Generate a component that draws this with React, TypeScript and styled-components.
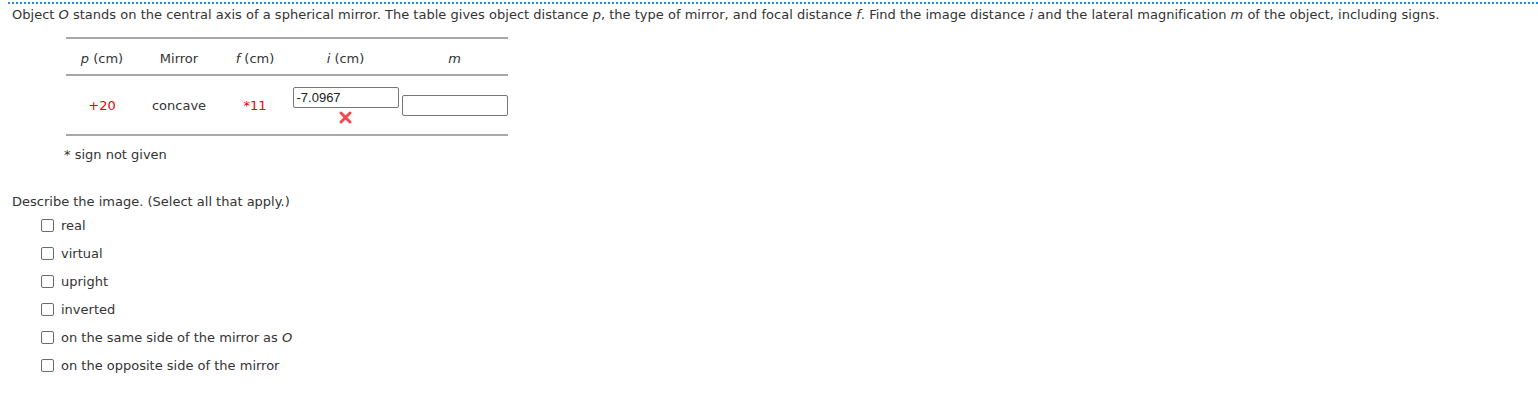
import React from "react";
import styled, { createGlobalStyle } from "styled-components";

const GlobalStyle = createGlobalStyle`
  body {
    margin: 0;
    background: #fff;
    font-family: "DejaVu Sans", Verdana, sans-serif;
    font-size: 13px;
    color: #333;
  }
`;

const Page = styled.div`
  padding: 2px 0 0 8px;
`;

const Question = styled.div`
  border-top: 2px dotted #1a8fe3;
  padding: 3px 0 0 4px;
  line-height: 16px;
  letter-spacing: 0.001em;
`;

const TableWrap = styled.div`
  margin: 14px 0 0 58px;
`;

const DataTable = styled.table`
  border-collapse: collapse;
  width: 442px;
  border-top: 2px solid #a8a8a8;
  border-bottom: 2px solid #a8a8a8;
`;

const HeadCell = styled.th<{ $w: number }>`
  width: ${({ $w }) => $w}px;
  font-weight: normal;
  text-align: center;
  height: 37px;
  padding: 4px 0 0;
  box-sizing: border-box;
  border-bottom: 2px solid #a8a8a8;
`;

const Cell = styled.td<{ $red?: boolean }>`
  text-align: center;
  height: 58px;
  padding: 0;
  vertical-align: middle;
  color: ${({ $red }) => ($red ? "#e8000b" : "#333")};
`;

const Var = styled.i`
  font-style: italic;
`;

const AnswerBox = styled.div`
  display: flex;
  flex-direction: column;
  align-items: center;
  gap: 3px;
`;

const Input = styled.div`
  box-sizing: border-box;
  width: 106px;
  height: 21px;
  border: 1px solid #767676;
  border-radius: 2px;
  font-family: "Liberation Sans", Arial, sans-serif;
  font-size: 13px;
  color: #222;
  line-height: 19px;
  padding-left: 3px;
  text-align: left;
`;

const Note = styled.div`
  margin: 11px 0 0 56px;
`;

const Prompt = styled.div`
  margin: 32px 0 0 4px;
`;

const Options = styled.div`
  display: flex;
  flex-direction: column;
  gap: 12px;
  margin: 8px 0 0 33px;
`;

const Option = styled.label`
  display: flex;
  align-items: center;
  gap: 7px;
  height: 16px;
`;

const Box = styled.span`
  box-sizing: border-box;
  width: 13px;
  height: 13px;
  border: 1px solid #6b6b6b;
  border-radius: 2px;
`;

const WrongMark = () => (
  <svg width="13" height="13" viewBox="0 0 13 13">
    <path d="M2 2 L11 11 M11 2 L2 11" stroke="#f04a50" strokeWidth="3" strokeLinecap="round" />
  </svg>
);

const options: React.ReactNode[] = [
  "real",
  "virtual",
  "upright",
  "inverted",
  <>on the same side of the mirror as <Var>O</Var></>,
  "on the opposite side of the mirror",
];

export default function App() {
  return (
    <Page>
      <GlobalStyle />
      <Question>
        Object <Var>O</Var> stands on the central axis of a spherical mirror. The table gives object distance{" "}
        <Var>p</Var>, the type of mirror, and focal distance <Var>f</Var>. Find the image distance <Var>i</Var> and the
        lateral magnification <Var>m</Var> of the object, including signs.
      </Question>
      <TableWrap>
        <DataTable>
          <thead>
            <tr>
              <HeadCell $w={72}><Var>p</Var> (cm)</HeadCell>
              <HeadCell $w={82}>Mirror</HeadCell>
              <HeadCell $w={70}><Var>f</Var> (cm)</HeadCell>
              <HeadCell $w={111}><Var>i</Var> (cm)</HeadCell>
              <HeadCell $w={107}><Var>m</Var></HeadCell>
            </tr>
          </thead>
          <tbody>
            <tr>
              <Cell $red>+20</Cell>
              <Cell>concave</Cell>
              <Cell $red>*11</Cell>
              <Cell>
                <AnswerBox>
                  <Input>-7.0967</Input>
                  <WrongMark />
                </AnswerBox>
              </Cell>
              <Cell>
                <AnswerBox>
                  <Input />
                </AnswerBox>
              </Cell>
            </tr>
          </tbody>
        </DataTable>
      </TableWrap>
      <Note>* sign not given</Note>
      <Prompt>Describe the image. (Select all that apply.)</Prompt>
      <Options>
        {options.map((o, i) => (
          <Option key={i}>
            <Box />
            <span>{o}</span>
          </Option>
        ))}
      </Options>
    </Page>
  );
}
